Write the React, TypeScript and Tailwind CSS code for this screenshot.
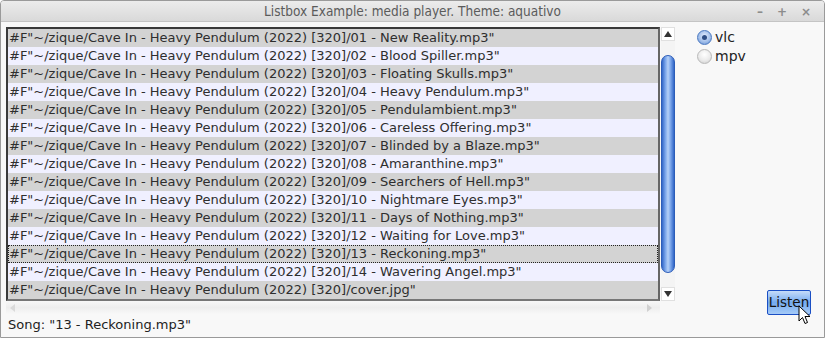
const files = [
  "01 - New Reality.mp3",
  "02 - Blood Spiller.mp3",
  "03 - Floating Skulls.mp3",
  "04 - Heavy Pendulum.mp3",
  "05 - Pendulambient.mp3",
  "06 - Careless Offering.mp3",
  "07 - Blinded by a Blaze.mp3",
  "08 - Amaranthine.mp3",
  "09 - Searchers of Hell.mp3",
  "10 - Nightmare Eyes.mp3",
  "11 - Days of Nothing.mp3",
  "12 - Waiting for Love.mp3",
  "13 - Reckoning.mp3",
  "14 - Wavering Angel.mp3",
  "cover.jpg",
];

const prefix = '#F"~/zique/Cave In - Heavy Pendulum (2022) [320]/';

function Radio({ checked, label }: { checked: boolean; label: string }) {
  return (
    <div className="flex items-center gap-[3px] h-[19px] overflow-hidden">
      <div
        className={
          checked
            ? "w-[15px] h-[15px] rounded-full border border-[#4a78c0] bg-[radial-gradient(circle_at_50%_40%,#e8f0ff_0%,#9dbbe8_60%,#5a86cc_100%)] flex items-center justify-center"
            : "w-[15px] h-[15px] rounded-full border border-[#b8b8b8] bg-[radial-gradient(circle_at_50%_35%,#ffffff_0%,#ebebeb_55%,#c9c9c9_100%)]"
        }
      >
        {checked && <div className="w-[5px] h-[5px] rounded-full bg-[#2f4f86]" />}
      </div>
      <span className="text-[14px] leading-[19px] text-[#222]">{label}</span>
    </div>
  );
}

export default function App() {
  return (
    <div
      className="w-[825px] h-[338px] flex flex-col bg-[#f8f8f8] border border-[#9a9a9a] rounded-t-[4px] overflow-hidden"
      style={{ fontFamily: '"DejaVu Sans", Verdana, sans-serif' }}
    >
      {/* Title bar */}
      <div className="relative h-[21px] shrink-0 bg-gradient-to-b from-[#ececec] to-[#d9d9d9] border-b border-[#c4c4c4] flex items-center justify-center">
        <span
          className="text-[13.5px] text-[#5b5b5b]"
          style={{ fontFamily: '"DejaVu Sans Condensed", "DejaVu Sans", sans-serif' }}
        >
          Listbox Example: media player. Theme: aquativo
        </span>
        <div className="absolute right-[13px] top-0 h-[21px] flex items-center gap-[14px] text-[12px] text-[#8c8c8c] font-bold">
          <span>–</span>
          <span>+</span>
          <span>×</span>
        </div>
      </div>

      {/* Body */}
      <div className="flex-1 flex pt-[5px] pl-[5px] pr-[13px]">
        <div className="flex flex-col">
          <div className="flex">
            {/* Listbox */}
            <div className="w-[654px] h-[274px] border-2 border-[#3a3a3a] border-r-[#666] border-b-[#777] bg-[#f0f0ff] overflow-hidden">
              {files.map((f, i) => (
                <div
                  key={f}
                  className={`h-[18px] leading-[18px] pl-[1px] text-[13px] text-[#2e2e2e] whitespace-nowrap ${
                    i % 2 === 0 ? "bg-[#d3d3d3]" : "bg-[#f0f0ff]"
                  } ${i === 12 ? "outline-1 outline-dotted outline-[#222] -outline-offset-1" : ""}`}
                >
                  {prefix}
                  {f}"
                </div>
              ))}
            </div>
            {/* Vertical scrollbar */}
            <div className="w-[14px] h-[274px] ml-[1px] flex flex-col bg-[#f4f4f4]">
              <div className="h-[14px] flex items-center justify-center border border-[#e0e0e0] bg-white">
                <div className="w-0 h-0 border-l-[4px] border-r-[4px] border-b-[6px] border-l-transparent border-r-transparent border-b-[#333]" />
              </div>
              <div className="flex-1 py-[14px] flex">
                <div className="flex-1 rounded-[7px] border border-[#2d5db8] bg-[linear-gradient(to_right,#3267c8_0%,#7fa9ec_30%,#b5d0f6_50%,#7fa9ec_70%,#3267c8_100%)]" />
              </div>
              <div className="h-[14px] flex items-center justify-center border border-[#e0e0e0] bg-white">
                <div className="w-0 h-0 border-l-[4px] border-r-[4px] border-t-[6px] border-l-transparent border-r-transparent border-t-[#333]" />
              </div>
            </div>
          </div>
          {/* Horizontal scrollbar */}
          <div className="w-[654px] h-[13px] bg-gradient-to-b from-[#f8f8f8] via-[#eeeeee] to-[#f8f8f8] flex items-center justify-between px-[4px]">
            <div className="w-0 h-0 border-t-[4px] border-b-[4px] border-r-[5px] border-t-transparent border-b-transparent border-r-[#dadada]" />
            <div className="w-0 h-0 border-t-[4px] border-b-[4px] border-l-[5px] border-t-transparent border-b-transparent border-l-[#d0d0d0] mr-[4px]" />
          </div>
          <div className="h-[22px] flex items-center pl-[2px] text-[13px] text-[#222]">
            Song: "13 - Reckoning.mp3"
          </div>
        </div>

        {/* Right panel */}
        <div className="flex-1 flex flex-col items-end">
          <div className="self-start ml-[22px] mt-[1px] flex flex-col">
            <Radio checked label="vlc" />
            <Radio checked={false} label="mpv" />
          </div>
          <div className="mt-auto mb-[22px] relative">
            <div className="h-[25px] w-[44px] flex items-center justify-center border border-[#1b4fc4] rounded-[2px] bg-gradient-to-b from-[#c6dcf8] via-[#74aaf0] to-[#a6cbf7] text-[13.5px] text-[#111]">
              Listen
            </div>
            <svg
              className="absolute left-[31px] top-[15px]"
              width="13"
              height="20"
              viewBox="0 0 13 20"
            >
              <path
                d="M1 1 L1 16 L4.5 12.5 L7 18.5 L9.5 17.5 L7 11.5 L12 11.5 Z"
                fill="#fff"
                stroke="#000"
                strokeWidth="1"
                strokeLinejoin="round"
              />
            </svg>
          </div>
        </div>
      </div>
    </div>
  );
}
